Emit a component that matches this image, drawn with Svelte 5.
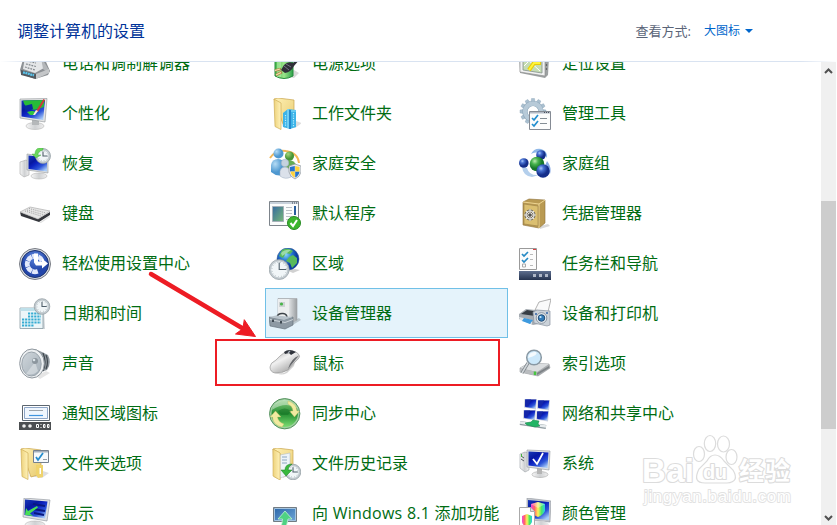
<script>
  const rows = [
    [["phone", "电话和调制解调器"], ["power", "电源选项"], ["location", "定位设置"]],
    [["personalize", "个性化"], ["workfolder", "工作文件夹"], ["admin", "管理工具"]],
    [["recovery", "恢复"], ["family", "家庭安全"], ["homegroup", "家庭组"]],
    [["keyboard", "键盘"], ["defaults", "默认程序"], ["credential", "凭据管理器"]],
    [["ease", "轻松使用设置中心"], ["region", "区域"], ["taskbar", "任务栏和导航"]],
    [["date", "日期和时间"], ["device", "设备管理器"], ["printer", "设备和打印机"]],
    [["sound", "声音"], ["mouse", "鼠标"], ["index", "索引选项"]],
    [["tray", "通知区域图标"], ["sync", "同步中心"], ["network", "网络和共享中心"]],
    [["folderopt", "文件夹选项"], ["history", "文件历史记录"], ["system", "系统"]],
    [["display", "显示"], ["addfeature", "向 Windows 8.1 添加功能"], ["color", "颜色管理"]],
  ];
  const items = rows.flat().map(([icon, label]) => ({ icon, label }));

  let selected = $state("device");

  const dots = [0, 1, 2, 3, 4];
  const spokes = [90, 135, 180, 225, 270, 315];
  const teeth = [0, 30, 60, 90, 120, 150, 180, 210, 240, 270, 300, 330];
</script>

{#snippet clock(cx, cy, r)}
  <circle {cx} {cy} {r} fill="#c5cdd2" stroke="#8e999f" stroke-width=".7" />
  <circle {cx} {cy} r={r - 1.6} fill="#f1f6f8" stroke="#aab5ba" stroke-width=".5" />
  <path d="M{cx} {cy - r + 3}V{cy}H{cx + r - 3}" fill="none" stroke="#50606b" stroke-width="1.1" />
  <circle {cx} {cy} r={r - 2.8} fill="none" stroke="#95a3aa" stroke-width=".8" stroke-dasharray=".7 2.2" />
{/snippet}

{#snippet folder(x)}
  <g transform="translate({x} 0)">
    <path d="M8 28l14 2 7-5-6-2z" fill="#000" opacity=".13" />
    <path d="M1 1l4-1 16 2v24l-10 3z" fill="url(#folderBack)" stroke="#c9a44c" stroke-width=".7" />
    <path d="M1 1l7 4v26.500l-6-3z" fill="url(#folderFront)" stroke="#cfad55" stroke-width=".7" />
  </g>
{/snippet}

{#snippet icon(name)}
  <svg class="icon" width="32" height="32" viewBox="0 0 32 32">
    {#if name === "phone"}
      <path d="M5 8l19-1 7 16-2 4-13 4-14-5-1-4z" fill="#8d9195" />
      <path d="M6 9l15-1 4 12-9 5-12-4z" fill="#e4e6e8" />
      <path d="M22 9l8 13-1 3-5-4z" fill="#b4b7ba" />
      <path d="M8 13l9 2m-10 1l10 2.500M6 19l10 3" stroke="#82888d" stroke-width="1.200" stroke-dasharray="1.800 1" />
      <path d="M2 22l15 4v5L2 27z" fill="#53595e" />
      <path d="M4 24.300l11 3" stroke="#5bc5ed" stroke-width="2.300" stroke-dasharray="2 .5" />
      <path d="M17 26l13-5v4l-13 6z" fill="#c4c6c8" />
    {:else if name === "personalize"}
      <ellipse cx="16" cy="28" rx="9" ry="3.500" fill="url(#metal)" stroke="#aaa" stroke-width=".5" />
      <path d="M13 21h7v6h-7z" fill="#b5b8ba" />
      <path d="M1 1l27-.5-2 23.500L1 20z" fill="#e2e3e4" stroke="#8f9497" stroke-width=".6" />
      <path d="M2.500 2.500L26 2l-1.800 20L2.500 18.500z" fill="url(#screen)" />
      <path d="M4 2.500l21.500-.5-.7 7q-8 4-13 2-6-1-7.800-8.500z" fill="#27bb38" />
      <path d="M5 8l8-2 1 5-8 2z" fill="#0a2a9e" />
      <path d="M8 14c3-1 3-1 6-1l3 1-3 3h-3z" fill="#31c440" />
      <path d="M17 13L24.500 1l1.500 1-7 12z" fill="#d13838" /><path d="M14 17l3-5 2 1-3 4z" fill="#f5ece1" />
    {:else if name === "recovery"}
      <path d="M1 14l6-2 3 2v13l-5 2-4-3z" fill="url(#metal)" stroke="#aaa" stroke-width=".6" />
      <ellipse cx="20" cy="28" rx="8" ry="3" fill="url(#metal)" stroke="#aaa" stroke-width=".5" />
      <path d="M8 6l21 3v16L8 22z" fill="#dcdee0" stroke="#969a9e" stroke-width=".6" />
      <path d="M9.500 7.500l18.500 2v14L9.500 21z" fill="url(#screen)" />
      {@render clock(24, 8, 7.5)}
      <path d="M24 0c-6-1-8 2-8 6h-3l4 4 5-3h-3c0-2 1-4 5-5z" fill="#6bd65c" stroke="#38a33a" stroke-width=".4" />
    {:else if name === "keyboard"}
      <path d="M20 25l10-7 1 1-9 6z" fill="#000" opacity=".12" />
      <path d="M1 14l18 7 12-7v3l-11 7L2 18z" fill="#34363c" />
      <path d="M1 14l10-5 20 4L19 21z" fill="#e6e6e6" stroke="#a5a5a5" stroke-width=".6" />
      <path d="M6 13l16 5M8 12l16 4.500M10 10.500L27 15" fill="none" stroke="#9f9f9f" stroke-width="1" stroke-dasharray="1 1.200" />
    {:else if name === "ease"}
      <circle cx="16" cy="16" r="15.500" fill="#d8dbe2" stroke="#777b83" />
      <circle cx="16" cy="16" r="13.500" fill="url(#easeBlue)" stroke="#1c326e" />
      {#each spokes as angle}
        <path d="M14 21l-1.500 4.500q3.500 1.500 7 0L18 21q-2 1-4 0z" fill="#e3e9fb" transform="rotate({angle - 90} 16 16)" />
      {/each}
      <path d="M15 5.500h4v8h4v-3l6 5-6 5v-3h-6l-2-3z" fill="#fff" />
    {:else if name === "date"}
      <path d="M3 12h22l1 19H4z" fill="#8a989f" opacity=".4" />
      <path d="M1 10h23v20.500H1z" fill="#ecf6f9" stroke="#8b9da5" stroke-width=".8" />
      <path d="M1.500 10h22v3h-22z" fill="#bfe0ea" />
      {#each dots as r}
        <path d="M{r < 2 ? 9 : 3} {15.500 + r * 3}H{r > 3 ? 15 : 22}" stroke="#36acd2" stroke-width="2" stroke-dasharray="2.200 .9" />
      {/each}
      {@render clock(23, 8.500, 7.800)}
    {:else if name === "sound"}
      <path d="M17 28l10-5 4 2-10 6z" fill="#000" opacity=".1" />
      <path d="M16 1l7 3 6 3q4 8-1 15l-6 2-6 4z" fill="#8f979e" />
      <path d="M24 5q4 9 0 18m3-16q3 7 0 14" fill="none" stroke="#3f474e" stroke-width="1.200" />
      <ellipse cx="13" cy="15.500" rx="12.300" ry="14.500" fill="#eceff1" stroke="#8f979e" />
      <ellipse cx="12.500" cy="16" rx="9.700" ry="12" fill="url(#cone)" stroke="#9aa4ac" />
      <path d="M7 26l9-12 3 9q-5 5-12 3z" fill="#dfe5e8" opacity=".6" />
      <circle cx="16" cy="13" r="3" fill="#8c969e" /><circle cx="15" cy="12" r="1.300" fill="#dce4e9" />
    {:else if name === "tray"}
      <path d="M3.500 7.500h27v15h-27z" fill="#fff" stroke="#5c6670" />
      <path d="M5.500 9.500h23v11h-23z" fill="#eff6fe" stroke="#8ea6c7" />
      <path d="M10 12.500h14" stroke="#9ea5ac" /><path d="M10 17.500h14" stroke="#3f94df" stroke-width="1.200" />
      <path d="M0 24h32v8H0z" fill="#4b4e51" />
      <circle cx="5" cy="28" r="1.800" fill="#eee" /><circle cx="11" cy="28" r="1.800" fill="#eee" />
      <path d="M17.500 26.500h2v3h-2zM24.500 26.500h1.500v3h-1.500zM28.500 26.500h1.500v3h-1.500z" fill="none" stroke="#fff" /><path d="M22 26v1m0 2v1" stroke="#fff" />
    {:else if name === "folderopt"}
      {@render folder(1)}
      <path d="M17 17h7v12l-5 1-2-3z" fill="#efd36d" /><path d="M20.500 20h1.500v6h-1.500z" fill="#fff" />
      <path d="M14.500 2.500h15v12h-15z" fill="#f6f9fb" stroke="#75818e" />
      <path d="M15 3h14v1.500H15z" fill="#a5b0bd" /><path d="M24 11.500h4" stroke="#969da5" />
      <path d="M17 9l2 3 5-7" fill="none" stroke="#248dce" stroke-width="1.800" />
    {:else if name === "display"}
      <ellipse cx="16" cy="27" rx="10" ry="4" fill="url(#metal)" stroke="#aaa" stroke-width=".5" />
      <path d="M5 0l26 2-3 21-24-4z" fill="#dfe1e4" stroke="#8c9298" stroke-width=".6" />
      <path d="M6 1.500l22.500 2L26 20.500 5.500 17z" fill="url(#screen)" />
      <path d="M14 6l12 2m-12 3l12 2m-11 2l10 2" stroke="#091880" stroke-width="1.800" />
      <path d="M7 10l2 3L18 8l1 1.500-8 6 3 2.500-8-1z" fill="#48df57" />
    {:else if name === "power"}
      <path d="M15 28l10 2 5-5-5-3z" fill="#000" opacity=".15" />
      <path d="M6 5h18v23q-9 5-18 0z" fill="url(#battery)" stroke="#268d3c" />
      <path d="M8 7h4v22H8z" fill="#b5f0a9" opacity=".6" />
      <path d="M31 11L25 18q-3 6-9 7l-4-3 3-5q4-4 9-2l7-6z" fill="#303039" />
      <path d="M15 18l5 4m-3-6l5 3" stroke="#777486" />
      <path d="M12 21l-6 1.500m7 1.500l-6 3" stroke="#aa8648" stroke-width="2.600" /><path d="M11 21l-5 1.500m6 2l-5 2.500" stroke="#f4e2ac" stroke-width="1.200" />
    {:else if name === "workfolder"}
      {@render folder(4)}
      <path d="M14 15l5-4 8 1v17l-6 2-7-2z" fill="#3db4e8" />
      <path d="M19 11v19M21 13h6" stroke="#94e2fa" stroke-width="1.200" />
      <path d="M16.500 17v12M24.500 15v14" stroke="#b8ecfd" stroke-width="1.200" stroke-dasharray="1.200 1.200" />
      <path d="M20 12h2v19h-2z" fill="#2589cc" />
    {:else if name === "family"}
      <path d="M1 10Q7 1 17 3M17 3q12 2 13 12" fill="none" stroke="#f3b858" stroke-width="2" />
      <path d="M14 27V18q1-6 6-6t8 6v9z" fill="#64ad52" /><circle cx="20.500" cy="8" r="4.600" fill="url(#personGreen)" />
      <path d="M2 24v-7q1-6 7-6t7 7v8q-7 4-14-2z" fill="url(#personBlue)" /><circle cx="9.500" cy="5.500" r="5" fill="url(#personBlue)" />
      <path d="M11 28v-5q1-4 5-4t6 5v5q-6 3-11-1z" fill="#dbe1ea" stroke="#98a9bd" stroke-width=".5" />
      <circle cx="16" cy="15" r="3.800" fill="#c5d2df" stroke="#9aacbf" stroke-width=".5" />
      <path d="M26 16l6 2v6q-1 5-6 7-5-2-6-7v-6z" fill="#e8ebee" stroke="#8b9298" stroke-width=".7" />
      <path d="M25.800 18v5.500H21V19zM26.200 29.500v-6h4.300q-.5 4-4.300 6z" fill="#2674cd" />
      <path d="M26.200 18v5.500h4.300V19zM25.800 29.500v-6h-4.300q.5 4 4.300 6z" fill="#ffd33b" />
    {:else if name === "defaults"}
      <path d="M.5 3.500h29v24H.5z" fill="#fbfcfc" stroke="#7d848b" />
      <path d="M1 4h28v2H1z" fill="#c8d1db" /><path d="M23 5h5" stroke="#38424f" stroke-dasharray="1 1" />
      <path d="M3.500 8.500h11v15h-11z" fill="url(#preview)" stroke="#a5b0b8" />
      <path d="M17 9.500h6m-6 3h6m-6 3h6m-6 3h6m-6 3h3" stroke="#bcc2c7" /><path d="M26 8v9" stroke="#285d9c" stroke-width="2" />
      <circle cx="25" cy="25" r="6.500" fill="#3cb52e" stroke="#288c24" />
      <path d="M21.500 25l2.500 3 4-6" fill="none" stroke="#fff" stroke-width="2" />
    {:else if name === "region"}
      <path d="M17 22l9-1 5 1-7 3z" fill="#000" opacity=".18" />
      <circle cx="19" cy="11" r="11" fill="url(#globe)" stroke="#2c5187" stroke-width=".5" />
      <path d="M13 2q6-3 11 1l-3 3-4-1-3 5-4-2zM24 7l4 3v5l-5 5-2-5-4-2 3-4z" fill="#58b95b" />
      <path d="M12 5q4-4 10-3l-4 3-5 3z" fill="#d4f5e3" opacity=".55" />
      {@render clock(10.200, 21.500, 10)}
    {:else if name === "device"}
      <path d="M18 26l12-6 2 2-10 6z" fill="#000" opacity=".18" />
      <path d="M9 .5h19V22l-8 3.500-11-7z" fill="#c3c7c9" stroke="#9a9ea1" stroke-width=".6" />
      <path d="M9 1h11v24L9 18z" fill="#eceeef" />
      <path d="M20 1h8v21l-8 3.500z" fill="url(#tower)" />
      <path d="M10 4h6v5h-6z" fill="#cfd3d5" /><circle cx="12.500" cy="6" r="1.600" fill="#49b449" />
      <path d="M8 19q1-4 6-3.500 4 .5 4 4" fill="none" stroke="#3d4348" stroke-width="1.500" />
      <path d="M0 19l15 2.500 9-2.500v8l-8 4-15-3z" fill="#8d99a3" stroke="#5d6973" stroke-width=".6" />
      <path d="M0 19l7-1.500 17 1.500-9 3z" fill="#b9c3cb" /><path d="M1 21.500l15 3 8-3" fill="none" stroke="#dce2e6" stroke-width=".8" />
      <path d="M4 21.500v2.500m8-1v2.500" stroke="#333e47" stroke-width="1.800" />
    {:else if name === "mouse"}
      <path d="M8 25q7 2 12-4l6-7-1 4-7 7q-6 3-10 0z" fill="#000" opacity=".18" />
      <path d="M1 19Q1 15 7 12q8-9 14-9 7 0 9 4 2 2-4 7l-7 8q-7 4-13 3-5-1-5-6z" fill="url(#mouseGrey)" stroke="#8b8b8b" stroke-width=".6" />
      <path d="M15 4q5-4 12 0l-5 3-2-2-4 1z" fill="#30343c" /><path d="M21 3l-2 2" stroke="#aab1bd" stroke-width="1.200" />
      <path d="M30 7.500q-8 3-11 13.500l3-4 5-6z" fill="#66686c" />
    {:else if name === "sync"}
      <circle cx="15.700" cy="15.700" r="15.200" fill="#9fd0a0" stroke="#3d8049" stroke-width=".8" />
      <circle cx="15.700" cy="15.700" r="13.200" fill="url(#syncGreen)" />
      <path d="M3 12Q5 3 15 2q9 0 13 8Q16 3 3 12z" fill="#fff" opacity=".4" />
      <path d="M19 3q8 2 9 10h2.500l-5 6-5-6H24q-.5-5-5-7zM13 29Q4 27 3.500 19H1l5.500-6 5.500 6H8.500q.5 5 6.500 7z" fill="#f1eaa0" stroke="#c0bd60" stroke-width=".4" />
      <path d="M9 13q7-5 13 0l-3 4H12z" fill="#126b21" opacity=".45" />
    {:else if name === "history"}
      {@render folder(3)}
      <path d="M11 7l10-2v22l-10 3z" fill="#edf3f8" stroke="#a9b6c3" stroke-width=".5" /><path d="M13 9h5m-5 3h5m-5 3h5" stroke="#8ca7c0" />
      <path d="M4 1l7 4v27l-7-4z" fill="url(#folderFront)" stroke="#cfad55" stroke-width=".6" />
      {@render clock(24, 24, 7.800)}
      <path d="M23 16q-7 0-7 6h-4l5 6 6-6h-4q0-3 4-6z" fill="#39b93d" stroke="#187c25" stroke-width=".5" />
    {:else if name === "addfeature"}
      <path d="M4.500 9.500h23v14h-23z" fill="url(#addBlue)" stroke="#737c83" /><path d="M5.500 10.500h21v12h-21z" fill="none" stroke="#a4c4e0" />
      <path d="M16 13l7 8h-4q0 6-5 10H9q5-4 4.500-10H9z" fill="#4fd283" stroke="#c4f2d4" stroke-width=".8" />
    {:else if name === "location"}
      <path d="M0 5h27l3 4-1 18-3 3-25-5z" fill="#9da1a2" /><path d="M1 6l25 1v21L1 24z" fill="#f1f2f2" stroke="#888" stroke-width=".6" />
      <path d="M4 8l19 1v16L4 22z" fill="#c5dcb3" stroke="#84918c" stroke-width=".8" />
      <path d="M5 18l8-8 9 5M7 10l14 13" stroke="#fff" fill="none" /><path d="M20 9v6h-5l-5 7" fill="none" stroke="#e7cc09" stroke-width="4" /><path d="M20 9v6h-5l-5 7" fill="none" stroke="#fff43a" stroke-width="2" />
      <path d="M27.500 12v12" stroke="#666" stroke-width="1.200" stroke-dasharray="2 2" />
    {:else if name === "admin"}
      {#each teeth as angle}
        <path d="M12 4l.5-3.500h3L16 4z" fill="#aac0d0" stroke="#8ca5b8" stroke-width=".4" transform="rotate({angle} 14 13.500)" />
      {/each}
      <circle cx="14" cy="13.500" r="8" fill="none" stroke="#8ca5b8" stroke-width="5.200" />
      <circle cx="14" cy="13.500" r="8" fill="none" stroke="#b7cad8" stroke-width="4.300" />
      <path d="M10.500 13.500h21v18h-21z" fill="#fcfcfc" stroke="#858b94" />
      <path d="M11 14h20v1.500H11z" fill="#b3bac5" /><path d="M25 14.500h5" stroke="#4b5260" stroke-dasharray="1 1" />
      <path d="M13 20l2 2 4-5m-6 9l2 2 4-5" fill="none" stroke="#228ecf" stroke-width="1.700" /><path d="M21 20.500h7m-7 5h7" stroke="#848d95" />
    {:else if name === "homegroup"}
      <path d="M12 6q3-6 10-5 7 2 6 9-2-4-6-4-6-3-10 0z" fill="#8fb8e8" /><path d="M3 19q1 9 10 10l7-2q-10 1-12-7z" fill="#b4cfec" /><path d="M28 13q5 6 3 13l-5-8z" fill="#86a9e4" />
      <circle cx="4.800" cy="15" r="4.800" fill="url(#ball)" /><circle cx="22" cy="7" r="4.800" fill="url(#ball)" />
      <circle cx="18" cy="16" r="7.300" fill="url(#ballGreen)" /><circle cx="24" cy="23" r="6.700" fill="url(#ball)" />
    {:else if name === "credential"}
      <path d="M20 28l9-2 2 2-10 3z" fill="#000" opacity=".15" />
      <path d="M4 4l6-3 16 1v23l-6 5-16-3z" fill="#b99a52" stroke="#8d713a" stroke-width=".6" />
      <path d="M4 4l16 2 6-4M20 6v24" fill="none" stroke="#eed592" /><path d="M5 6l14 2v20L5 26z" fill="#dbbf70" stroke="#9a8046" stroke-width=".6" />
      <circle cx="11" cy="17" r="5" fill="#80786a" stroke="#65635e" /><circle cx="11" cy="17" r="4" fill="none" stroke="#e7e7e2" stroke-width="1.200" />
      <path d="M11 11v12m-6-6h12M7 13l8 8m-8 0l8-8" stroke="#e5e4df" /><circle cx="11" cy="17" r="1.600" fill="#55534e" />
    {:else if name === "taskbar"}
      <path d="M.5.500h17v21H.5z" fill="#fcfcfc" stroke="#9a9a9a" /><path d="M14 1.500h3" stroke="#dc4242" />
      <path d="M3 6l2 2 4-4m-6 8l2 2 4-4" fill="none" stroke="#268ac5" stroke-width="1.700" />
      <path d="M3.500 16h3v3h-3z" fill="none" stroke="#aaa" /><path d="M11 6.500h3m-3 5h3m-3 6h3" stroke="#bbb" />
      <path d="M0 23h32v9H0z" fill="url(#bar)" /><path d="M14 26h3v3h-3zM20 26h3v3h-3zM26 26h3v3h-3z" fill="#aeb6c6" />
    {:else if name === "printer"}
      <path d="M16 12l4-8 12-3-3 13z" fill="#fafafa" stroke="#929292" stroke-width=".7" />
      <path d="M0 16l7-5 19 2-1 12-11 2L0 21z" fill="#a5abb1" /><path d="M2 16l6-4 12 2-4 4z" fill="#363d44" />
      <path d="M0 19l13 3v4L1 22z" fill="#e2e5e8" /><path d="M5 20l9 2-3 4-8-3z" fill="#3d9adf" />
      <path d="M14 14l4-2 13 1v14l-3 1-13-3z" fill="#cbd2d9" stroke="#8994a0" stroke-width=".7" />
      <circle cx="22.500" cy="20" r="5.300" fill="#eef2f5" stroke="#8c97a2" /><circle cx="22.500" cy="20" r="3.300" fill="#347db9" stroke="#244c73" /><circle cx="21.500" cy="19" r="1.100" fill="#c7ecff" />
      <path d="M16 16h2m9-1h2" stroke="#3665a6" stroke-width="1.500" />
    {:else if name === "index"}
      <path d="M1 20l9-5 20 1 1 4-12 8-18-4z" fill="#a9acaf" stroke="#85898c" stroke-width=".5" />
      <path d="M1 20l9-5 20 1-12 8z" fill="#dadddf" /><path d="M1 20.500l17 3.500v4L1 24z" fill="#b9bcbf" /><path d="M16 23.500v3.500" stroke="#48c540" stroke-width="2.500" />
      <path d="M18 25l12-7v2l-12 7z" fill="#7d8286" />
      <path d="M9 15L3 25" stroke="#7c8389" stroke-width="3.200" /><path d="M9 15L3 25" stroke="#d1d6da" stroke-width="1.500" />
      <circle cx="15" cy="9.500" r="7.300" fill="#cce8fa" stroke="#8998a3" stroke-width="1.500" /><path d="M9 10q1-7 8-6 3 3-8 6z" fill="#fff" opacity=".8" />
    {:else if name === "network"}
      {#each [[5, 0], [18, 1], [4, 11], [17, 12]] as [x, y]}
        <g transform="translate({x} {y})"><path d="M.5 1h12.500l-1 10.500-12-2z" fill="#cbd0dd" /><path d="M1.200 1.500h11l-1 9-10-1.500z" fill="url(#screen)" /><path d="M1.200 1.500h6l-3 7-3-.5z" fill="#1426a8" /></g>
      {/each}
      <path d="M1 25l26 4" stroke="#8e9aa0" stroke-width="4" /><path d="M1 24.500l26 4" stroke="#e6ebed" stroke-width="2.300" />
      <path d="M6 25l6-1 2-2 6 1-1 3 2 2-5 1-8-2z" fill="#22b565" stroke="#128344" stroke-width=".5" />
    {:else if name === "system"}
      <path d="M1 6l5-2 4 1v17l-4 2-5-4z" fill="url(#metal)" stroke="#999fa5" stroke-width=".6" /><path d="M2 8l3 2m-3 1l3 2" stroke="#555b60" /><path d="M2.500 6v3" stroke="#43b23d" />
      <ellipse cx="21" cy="26.500" rx="8" ry="3" fill="url(#metal)" stroke="#999" stroke-width=".5" /><path d="M18 20h5v6h-5z" fill="#b5b5b5" />
      <path d="M8 2l23 1-1 19-22-3z" fill="#dfe1e4" stroke="#92979c" stroke-width=".6" /><path d="M9.500 3.500l20 1-1 15.500-19-2.500z" fill="url(#screen)" />
      <path d="M14 11l4 5 6-11" fill="none" stroke="#fff" stroke-width="1.800" />
    {:else if name === "color"}
      <path d="M8 0l24 3-1 21-23-2z" fill="#c3c7cf" stroke="#92979e" stroke-width=".6" /><path d="M9 2l21 2v18L9 20z" fill="url(#screen)" />
      <ellipse cx="22" cy="27" rx="8" ry="4" fill="url(#metal)" />
      <path d="M12 6l7-2 7 2v7q-2 4-7 6-5-2-7-6z" fill="url(#rainbow)" /><path d="M12 6l7-2 7 2-7 4z" fill="#fff" opacity=".35" />
      <path d="M.5 9.500h11l4 4v18H.5z" fill="#fff" stroke="#aaa" /><path d="M11.500 9.500v4h4" fill="#ddd" stroke="#aaa" />
      <path d="M3 18l5-2 5 2v6q-2 4-5 5-4-1-5-5z" fill="url(#rainbow)" />
    {/if}
  </svg>
{/snippet}

<div class="panel">
  <header>
    <h1>调整计算机的设置</h1>
    <div class="view-by">
      <span>查看方式:</span>
      <button class="view-button">大图标 <i class="caret"></i></button>
    </div>
  </header>
  <div class="divider"></div>
  <main>
    <div class="viewport">
      <div class="items">
        {#each items as item}
          <button class="item" class:selected={selected === item.icon} onclick={() => (selected = item.icon)}>
            {@render icon(item.icon)}
            <span class:latin={item.icon === "addfeature"}>{item.label}</span>
          </button>
        {/each}
      </div>
    </div>
    <div class="scrollbar">
      <svg width="15" height="17" viewBox="0 0 15 17"><path d="M4 11l3.500-3.500L11 11" /></svg>
      <div class="thumb"></div>
      <svg class="down" width="15" height="17" viewBox="0 0 15 17"><path d="M4 8l3.500 3.500L11 8" /></svg>
    </div>
  </main>

  <svg class="overlay" width="837" height="525" viewBox="0 0 837 525">
    <defs>
      <linearGradient id="screen" x2=".8" y2="1"><stop stop-color="#1839b9" /><stop offset=".35" stop-color="#0718a0" /><stop offset=".5" stop-color="#0c22c0" /><stop offset=".75" stop-color="#2d55d8" /><stop offset="1" stop-color="#a9ccf8" /></linearGradient>
      <linearGradient id="metal"><stop stop-color="#f6f6f6" /><stop offset=".5" stop-color="#cfd1d3" /><stop offset="1" stop-color="#eee" /></linearGradient>
      <linearGradient id="tower"><stop stop-color="#dfe2e4" /><stop offset="1" stop-color="#9a9ea1" /></linearGradient>
      <linearGradient id="folderBack" x2="1" y2="1"><stop stop-color="#fff1b5" /><stop offset="1" stop-color="#e8cb70" /></linearGradient>
      <linearGradient id="folderFront"><stop stop-color="#edd27c" /><stop offset="1" stop-color="#fff2b9" /></linearGradient>
      <radialGradient id="easeBlue" cy=".25"><stop stop-color="#5a84db" /><stop offset="1" stop-color="#2346aa" /></radialGradient>
      <linearGradient id="cone" x2="1" y2="1"><stop stop-color="#d0d7dc" /><stop offset="1" stop-color="#a3aeb7" /></linearGradient>
      <linearGradient id="battery"><stop stop-color="#4bb952" /><stop offset=".5" stop-color="#9be589" /><stop offset="1" stop-color="#2ca04a" /></linearGradient>
      <radialGradient id="personGreen" cx=".35" cy=".3"><stop stop-color="#a5d67e" /><stop offset="1" stop-color="#479636" /></radialGradient>
      <radialGradient id="personBlue" cx=".3" cy=".3"><stop stop-color="#b5dcf5" /><stop offset="1" stop-color="#4e98d0" /></radialGradient>
      <linearGradient id="preview" x2="1" y2="1"><stop stop-color="#356aa0" /><stop offset="1" stop-color="#77b877" /></linearGradient>
      <radialGradient id="globe" cx=".4" cy=".3"><stop stop-color="#8ad8f8" /><stop offset=".5" stop-color="#2b80d6" /><stop offset="1" stop-color="#0a3ba1" /></radialGradient>
      <linearGradient id="mouseGrey" x2=".7" y2="1"><stop stop-color="#a9a9a9" /><stop offset=".45" stop-color="#f0f0f0" /><stop offset="1" stop-color="#9d9d9d" /></linearGradient>
      <linearGradient id="syncGreen" x2="0" y2="1"><stop stop-color="#83c87b" /><stop offset=".5" stop-color="#248e32" /><stop offset="1" stop-color="#7bdc71" /></linearGradient>
      <linearGradient id="addBlue" x2="1" y2="1"><stop stop-color="#2964a8" /><stop offset="1" stop-color="#70a9d9" /></linearGradient>
      <radialGradient id="ball" cx=".35" cy=".3"><stop stop-color="#a9c7fa" /><stop offset=".4" stop-color="#456fd0" /><stop offset="1" stop-color="#142e8a" /></radialGradient>
      <radialGradient id="ballGreen" cx=".35" cy=".3"><stop stop-color="#bdebb3" /><stop offset=".45" stop-color="#48b34e" /><stop offset="1" stop-color="#16762b" /></radialGradient>
      <linearGradient id="bar" x2="0" y2="1"><stop stop-color="#5d6d8d" /><stop offset="1" stop-color="#25334f" /></linearGradient>
      <linearGradient id="rainbow"><stop stop-color="#f546d8" /><stop offset=".25" stop-color="#ff6666" /><stop offset=".5" stop-color="#fff45a" /><stop offset=".75" stop-color="#4be967" /><stop offset="1" stop-color="#29cce8" /></linearGradient>
    </defs>

    <g class="mark">
      <path d="M151 274L242 328" />
      <path class="head" d="M244.500 320L255.500 336.500l-20-2.500 7-5z" />
      <rect x="216" y="340" width="283" height="45" />
    </g>

    <g class="watermark">
      <ellipse cx="699" cy="454" rx="5.500" ry="7.500" />
      <ellipse cx="710" cy="443.500" rx="5.700" ry="8" />
      <ellipse cx="723.500" cy="444" rx="6" ry="8" />
      <ellipse cx="731.500" cy="457" rx="5.500" ry="7.500" />
      <path d="M715 455q-5 0-8 6l-8 8q-7 14 6 14h22q13-1 6-13l-9-9q-4-6-9-6z" />
      <text class="bai" x="642" y="482" textLength="52">Bai</text>
      <text class="du" x="703" y="479" textLength="24">du</text>
      <text class="exp" x="739" y="480" textLength="51">经验</text>
      <text class="url" x="644" y="502" textLength="147">jingyan.baidu.com</text>
    </g>
  </svg>
</div>

<style>
  :global(body) {
    overflow: hidden;
  }

  .panel {
    position: relative;
    display: flex;
    flex-direction: column;
    width: 837px;
    height: 525px;
    overflow: hidden;
    background: #fff;
    font-family: "Open Sans", "Noto Sans CJK SC", sans-serif;
  }

  header {
    display: flex;
    align-items: center;
    justify-content: space-between;
    height: 61px;
    padding: 0 84px 0 17px;
    box-sizing: border-box;
  }

  h1 {
    margin: 0;
    color: #003399;
    font-size: 16px;
    font-weight: 400;
    line-height: 24px;
  }

  .view-by {
    display: flex;
    align-items: center;
    gap: 13px;
    color: #5a6478;
    font-size: 13px;
    line-height: 18px;
  }

  button {
    padding: 0;
    border: 0;
    background: none;
    font-family: inherit;
    cursor: pointer;
  }

  .view-button {
    display: flex;
    align-items: center;
    gap: 5px;
    color: #0066cc;
    font-size: 12px;
    line-height: 20px;
  }

  .caret {
    border: 4px solid transparent;
    border-top-color: #0066cc;
    border-bottom: 0;
  }

  .divider {
    flex: none;
    height: 1px;
    background: linear-gradient(to right, #fff, #d9e3f1 30px, #d9e3f1 800px, #fff);
  }

  main {
    display: flex;
    flex: 1;
    min-height: 0;
    padding-right: 1px;
  }

  .viewport {
    flex: 1;
    overflow: hidden;
  }

  /* list is scrolled part of the way into its first row */
  .items {
    display: grid;
    grid-template-columns: repeat(3, 243px);
    grid-auto-rows: 50px;
    column-gap: 7px;
    margin-top: -24px;
    padding-left: 15px;
  }

  .item {
    display: flex;
    align-items: center;
    gap: 11px;
    padding: 1px 0 0 3px;
    border: 1px solid transparent;
    color: #006c12;
    font-size: 16px;
    line-height: 24px;
    text-align: left;
    white-space: nowrap;
  }

  .item span {
    margin-top: -1px;
  }

  .latin {
    letter-spacing: 0.25px;
  }

  .selected {
    border-color: #70c0e7;
    background: #e5f3fb;
  }

  .icon {
    flex: none;
  }

  .scrollbar {
    display: flex;
    flex-direction: column;
    width: 15px;
    background: #f0f0f0;
  }

  .scrollbar svg {
    flex: none;
    fill: none;
    stroke: #505050;
    stroke-width: 2;
  }

  .thumb {
    height: 228px;
    margin-top: 122px;
    background: #cdcdcd;
  }

  .scrollbar .down {
    margin-top: auto;
  }

  .overlay {
    position: absolute;
    inset: 0;
    pointer-events: none;
  }

  .mark {
    fill: none;
    stroke: #ed1c24;
    stroke-width: 2;
  }

  .mark path {
    stroke-width: 4.5;
    stroke-linecap: round;
  }

  .mark .head {
    fill: #ed1c24;
    stroke-width: 1;
  }

  .watermark {
    fill: #fff;
    stroke: #dcdcdc;
    stroke-width: 1.2;
  }

  .watermark text {
    font-family: "Liberation Sans", "Noto Sans CJK SC", sans-serif;
    font-weight: 700;
    stroke-width: 2.2;
    stroke-linejoin: round;
    paint-order: stroke;
  }

  .bai {
    font-size: 33px;
  }

  .du {
    font-size: 20px;
  }

  .exp {
    font-size: 25px;
  }

  .url {
    font-size: 17px;
  }

  .watermark .url {
    font-weight: 400;
    stroke: #e2e2e2;
    stroke-width: 1.8;
  }
</style>
